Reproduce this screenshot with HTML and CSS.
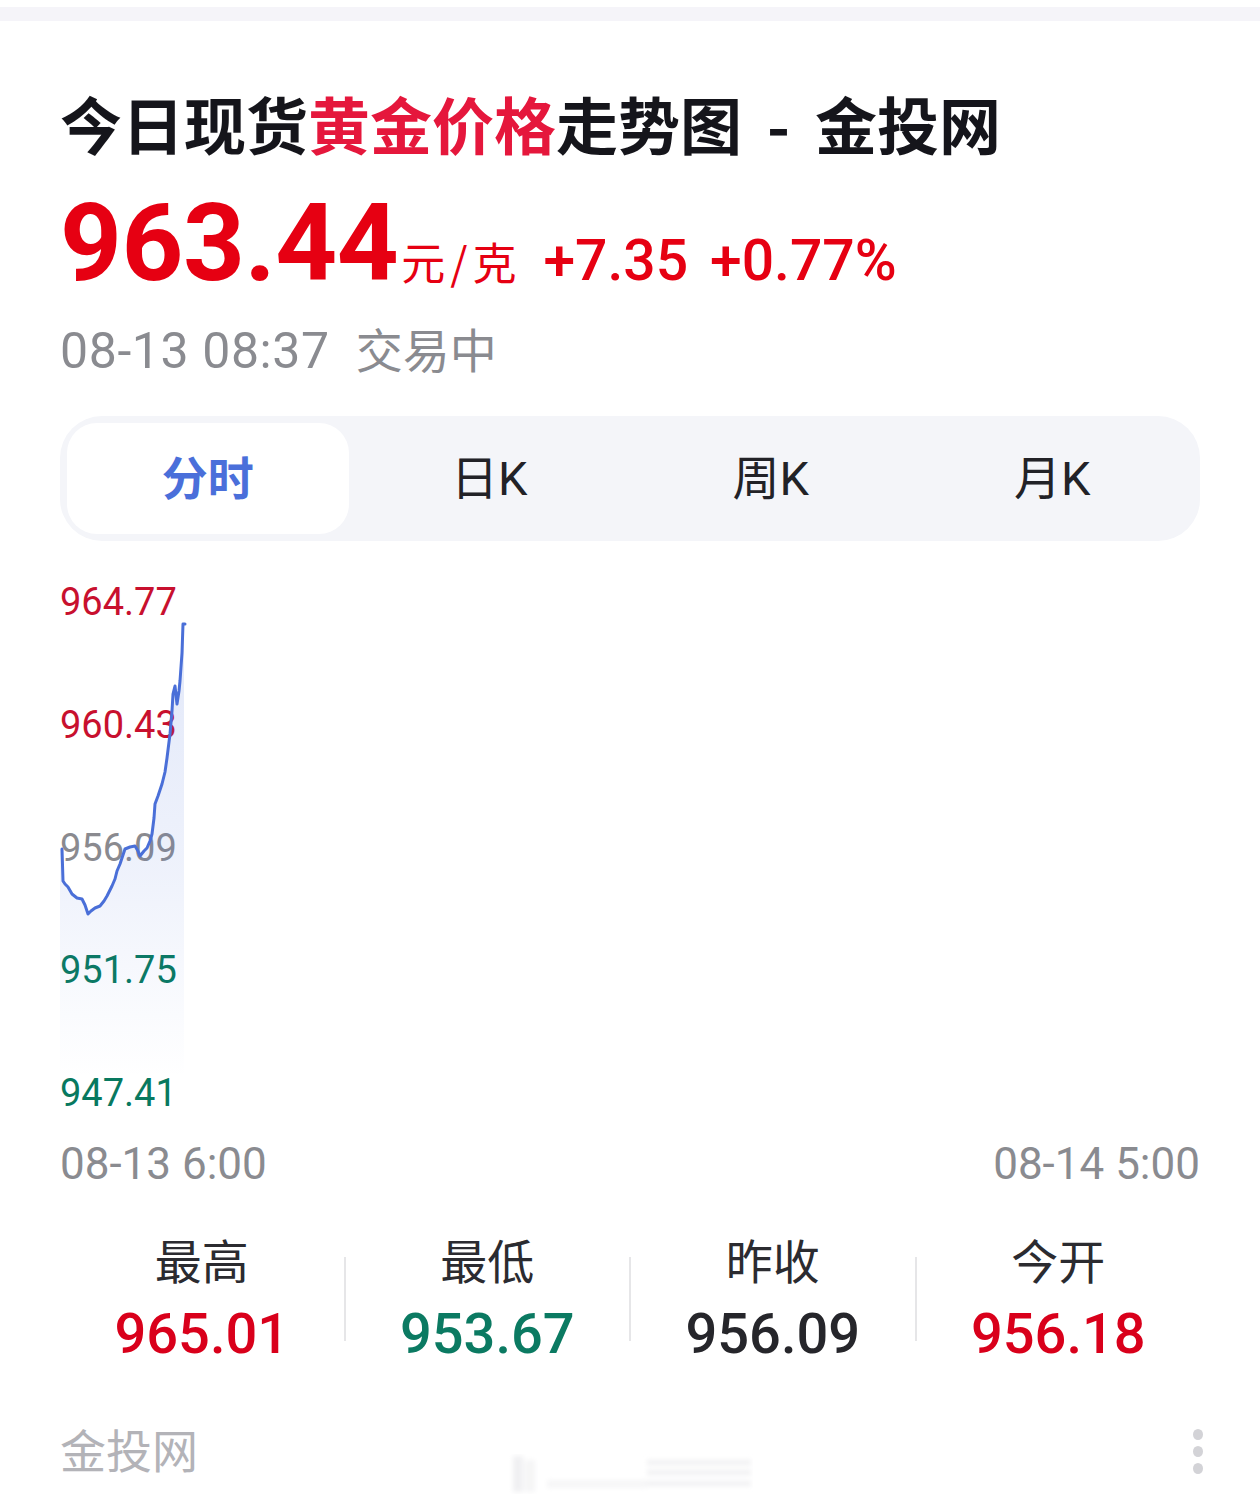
FILE: index.html
```html
<!DOCTYPE html>
<html lang="zh-CN">
<head>
<meta charset="utf-8">
<title>今日现货黄金价格走势图 - 金投网</title>
<link rel="stylesheet" href="styles.css">
</head>
<body>
<div class="topband"></div>
<main class="page">
  <h1 class="title">今日现货<span class="hl">黄金价格</span>走势图<span class="dash">-</span>金投网</h1>
  <div class="price-row">
    <span class="price">963.44</span>
    <span class="unit">元/克</span>
    <span class="chg">+7.35</span>
    <span class="chg pct">+0.77%</span>
  </div>
  <div class="time-row">
    <span class="time">08-13 08:37</span>
    <span class="status">交易中</span>
  </div>
  <div class="tabs">
    <div class="tab active">分时</div>
    <div class="tab">日K</div>
    <div class="tab">周K</div>
    <div class="tab">月K</div>
  </div>
  <div class="chart">
    <div class="ylabels">
      <span class="lab-up">964.77</span>
      <span class="lab-up">960.43</span>
      <span class="lab-flat">956.09</span>
      <span class="lab-down">951.75</span>
      <span class="lab-down">947.41</span>
    </div>
    <svg class="plot" viewBox="0 0 1140 529" width="1140" height="529">
      <defs>
        <linearGradient id="fillg" x1="0" y1="41" x2="0" y2="495" gradientUnits="userSpaceOnUse">
          <stop offset="0" stop-color="#4a70d9" stop-opacity="0.16"/>
          <stop offset="0.55" stop-color="#4a70d9" stop-opacity="0.09"/>
          <stop offset="1" stop-color="#4a70d9" stop-opacity="0"/>
        </linearGradient>
      </defs>
      <path fill="url(#fillg)" d="M0,266 L2,266 L3,298 L5,301 L8,304 L12,311 L17,315 L22,316 L25,322 L28,331 L31,328 L35,325 L40,323 L44,318 L47,313 L52,303 L55,296 L57,288 L60,281 L62,275 L65,266 L70,264 L75,263 L78,268 L80,273 L84,268 L87,265 L90,258 L92,251 L94,235 L95,221 L98,213 L102,201 L105,189 L107,175 L110,151 L112,128 L113,111 L115,103 L117,121 L119,108 L120,98 L122,70 L123,41 L124,41 L124,495 L0,495 Z"/>
      <polyline fill="none" stroke="#4a6fd8" stroke-width="3" stroke-linejoin="round" stroke-linecap="round" points="2,266 3,298 5,301 8,304 12,311 17,315 22,316 25,322 28,331 31,328 35,325 40,323 44,318 47,313 52,303 55,296 57,288 60,281 62,275 65,266 70,264 75,263 78,268 80,273 84,268 87,265 90,258 92,251 94,235 95,221 98,213 102,201 105,189 107,175 110,151 112,128 113,111 115,103 117,121 119,108 120,98 122,70 123,41 125,41"/>
    </svg>
  </div>
  <div class="xlabels">
    <span>08-13 6:00</span>
    <span>08-14 5:00</span>
  </div>
  <div class="stats">
    <div class="stat">
      <span class="stat-label">最高</span>
      <span class="stat-value up">965.01</span>
    </div>
    <div class="divider"></div>
    <div class="stat">
      <span class="stat-label">最低</span>
      <span class="stat-value down">953.67</span>
    </div>
    <div class="divider"></div>
    <div class="stat">
      <span class="stat-label">昨收</span>
      <span class="stat-value flat">956.09</span>
    </div>
    <div class="divider"></div>
    <div class="stat">
      <span class="stat-label">今开</span>
      <span class="stat-value up">956.18</span>
    </div>
  </div>
  <footer class="foot">
    <span class="brand">金投网</span>
    <svg class="watermark" viewBox="0 0 246 40" width="246" height="40">
      <defs>
        <filter id="blur" x="-20%" y="-40%" width="140%" height="180%">
          <feGaussianBlur stdDeviation="2.5"/>
        </filter>
      </defs>
      <g filter="url(#blur)" fill="#f0f0f2">
        <rect x="6" y="2" width="10" height="36"/>
        <rect x="18" y="6" width="10" height="32" fill="#f5f5f6"/>
        <rect x="40" y="26" width="100" height="8" fill="#f6f6f7"/>
        <rect x="140" y="6" width="104" height="5"/>
        <rect x="140" y="16" width="104" height="5"/>
        <rect x="140" y="27" width="104" height="5"/>
      </g>
    </svg>
    <span class="dots"><i></i><i></i><i></i></span>
  </footer>
</main>
</body>
</html>
```
FILE: styles.css
```css
body {
  margin: 0;
  background: #ffffff;
  font-family: Roboto, "Noto Sans CJK SC", sans-serif;
}

.topband {
  margin-top: 7px;
  height: 14px;
  background: #f5f4f9;
}

.page {
  padding: 0 60px;
}

.title {
  margin: 67px 0 0 0;
  font-family: "Noto Sans CJK SC", sans-serif;
  font-weight: 700;
  font-size: 62px;
  line-height: 70px;
  color: #15151b;
  white-space: nowrap;
}

.hl {
  color: #e5173c;
}

.dash {
  margin: 0 25px;
}

.price-row {
  display: flex;
  align-items: baseline;
  margin-top: 30px;
  color: #e60012;
}

.price {
  font-weight: 700;
  font-size: 108px;
  line-height: 110px;
  letter-spacing: -0.5px;
}

.unit {
  font-family: "Noto Sans CJK SC", sans-serif;
  font-size: 44px;
  line-height: 44px;
  margin-left: 3px;
  letter-spacing: 5px;
}

.chg {
  font-size: 57px;
  line-height: 57px;
  font-weight: 500;
  margin-left: 22px;
}

.chg.pct {
  margin-left: 22px;
}

.time-row {
  display: flex;
  align-items: baseline;
  margin-top: 25px;
  color: #8a8b90;
}

.time {
  font-size: 50px;
  line-height: 49px;
  letter-spacing: 0.6px;
}

.status {
  font-family: "Noto Sans CJK SC", sans-serif;
  font-size: 47px;
  line-height: 49px;
  margin-left: 26px;
}

.tabs {
  margin-top: 40px;
  display: flex;
  padding: 7px;
  background: #f4f5f9;
  border-radius: 42px;
}

.tab {
  flex: 1;
  height: 111px;
  box-sizing: border-box;
  padding-bottom: 8px;
  display: flex;
  align-items: center;
  justify-content: center;
  font-size: 47px;
  color: #222227;
  border-radius: 30px;
}

.tab.active {
  background: #ffffff;
  color: #4a6fda;
  font-weight: 700;
  font-family: "Noto Sans CJK SC", sans-serif;
  font-size: 46px;
}

.chart {
  position: relative;
  margin-top: 42px;
  height: 529px;
}

.ylabels {
  height: 100%;
  display: flex;
  flex-direction: column;
  justify-content: space-between;
  align-items: flex-start;
  font-size: 38px;
  line-height: 38px;
}

.lab-up { color: #c8102e; }
.lab-flat { color: #8a8a8f; }
.lab-down { color: #08795f; }

.plot {
  position: absolute;
  left: 0;
  top: 0;
  overflow: visible;
}

.xlabels {
  margin-top: 30px;
  display: flex;
  justify-content: space-between;
  font-size: 44px;
  line-height: 44px;
  color: #8a8b90;
}

.stats {
  margin-top: 49px;
  display: flex;
  align-items: center;
}

.stat {
  flex: 1;
  display: flex;
  flex-direction: column;
  align-items: center;
}

.stat-label {
  font-family: "Noto Sans CJK SC", sans-serif;
  font-size: 47px;
  line-height: 47px;
  color: #2b2b30;
}

.stat-value {
  margin-top: 24px;
  font-size: 56px;
  line-height: 56px;
  font-weight: 500;
}

.up { color: #d9001b; }
.down { color: #0b7a62; }
.flat { color: #26262b; }

.divider {
  width: 2px;
  height: 84px;
  background: #e6e6e8;
}

.foot {
  margin-top: 63px;
  display: grid;
  grid-template-columns: 1fr auto 1fr;
  align-items: start;
}

.brand {
  font-family: "Noto Sans CJK SC", sans-serif;
  font-size: 46px;
  line-height: 46px;
  color: #b3b3b8;
}

.watermark {
  margin-top: 29px;
}

.dots {
  justify-self: end;
  display: flex;
  flex-direction: column;
  gap: 6px;
  margin-top: 4px;
  margin-right: -3px;
}

.dots i {
  display: block;
  width: 10px;
  height: 11px;
  border-radius: 50%;
  background: #d3d3d7;
}
```
